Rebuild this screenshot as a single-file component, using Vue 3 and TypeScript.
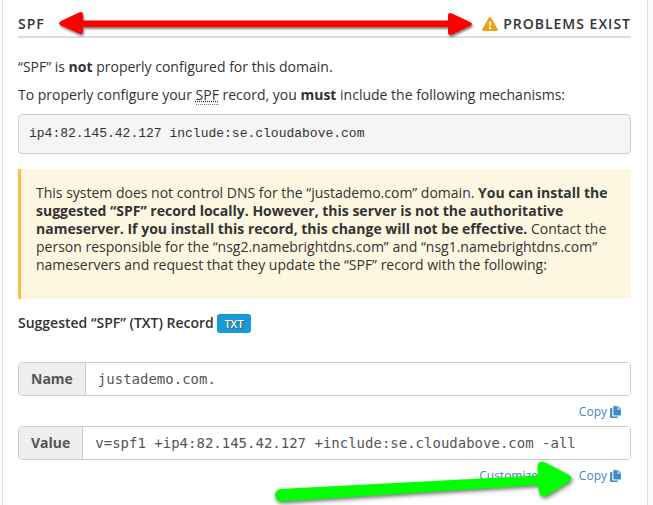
<script setup lang="ts">
interface RecordField {
  id: string
  label: string
  value: string
  customizable: boolean
}

const mechanisms = 'ip4:82.145.42.127 include:se.cloudabove.com'

const fields: RecordField[] = [
  { id: 'spf-name', label: 'Name', value: 'justademo.com.', customizable: false },
  {
    id: 'spf-value',
    label: 'Value',
    value: 'v=spf1 +ip4:82.145.42.127 +include:se.cloudabove.com -all',
    customizable: true,
  },
]

function copy(text: string): void {
  void navigator.clipboard?.writeText(text)
}
</script>

<template>
  <main class="page">
    <section class="panel">
      <header class="heading">
        <h2 class="title">SPF</h2>
        <div class="status">
          <svg class="warning" viewBox="0 0 16 14" aria-hidden="true">
            <path
              d="M6.8.8C7.3-.2 8.7-.2 9.2.8l6.5 11.1c.5.9-.1 2.1-1.2 2.1h-13C.4 14-.2 12.8.3 11.9z"
              fill="#eaa413"
            />
            <path d="M7 4.400h2l-.3 4.700H7.300z" fill="#fff" />
            <circle cx="8" cy="11.200" r="1.150" fill="#fff" />
          </svg>
          <span>Problems Exist</span>
        </div>
      </header>

      <p class="text">“SPF” is <strong>not</strong> properly configured for this domain.</p>
      <p class="text">
        To properly configure your <abbr title="Sender Policy Framework">SPF</abbr> record, you
        <strong>must</strong> include the following mechanisms:
      </p>
      <pre class="code">{{ mechanisms }}</pre>

      <div class="callout">
        This system does not control DNS for the “justademo.com” domain.
        <strong>You can install the suggested “SPF” record locally. However, this server is not the
        authoritative nameserver. If you install this record, this change will not be
        effective.</strong>
        Contact the person responsible for the “nsg2.namebrightdns.com” and
        “nsg1.namebrightdns.com” nameservers and request that they update the “SPF” record with the
        following:
      </div>

      <h3 class="subtitle">Suggested “SPF” (TXT) Record <span class="badge">TXT</span></h3>

      <div v-for="field in fields" :key="field.id" class="field">
        <div class="group">
          <label class="addon" :for="field.id">{{ field.label }}</label>
          <input :id="field.id" class="input" type="text" :value="field.value" readonly />
        </div>
        <div class="actions">
          <button v-if="field.customizable" type="button" class="action">Customize</button>
          <button type="button" class="action" @click="copy(field.value)">
            Copy
            <svg class="copy-icon" viewBox="0 0 11 12" aria-hidden="true">
              <path d="M2.300 2H1a1 1 0 0 0-1 1v8a1 1 0 0 0 1 1h6a1 1 0 0 0 1-1v-.6H3.300a1 1 0 0 1-1-1z" />
              <path d="M4.300 0h3.200v3.500H11V8.600a1 1 0 0 1-1 1H4.300a1 1 0 0 1-1-1V1a1 1 0 0 1 1-1z" />
              <path d="M8.300 0 11 2.700H8.300z" />
            </svg>
          </button>
        </div>
      </div>
    </section>

    <svg class="arrows" width="653" height="505" viewBox="0 0 653 505" aria-hidden="true">
      <g class="red">
        <path
          d="M61 21 79 12.500Q83 11 83 15V20.500H448V16Q448 12 452 13.500L470 22Q474 24 470 26L452 34.500Q448 36 448 32V27H83V31Q83 35 79 33.500L61 25.500Q57 23.500 61 21z"
        />
      </g>
      <g class="green">
        <path
          d="M281 489 538 475.500 537.500 467Q538 460 545 462.500L569 475Q574 478 569 482L548 495Q540 499 539 491L538.500 485 282 501.500C273 502 273 489.500 281 489z"
        />
      </g>
    </svg>
  </main>
</template>

<style>
body {
  margin: 0;
  background: #fafafa;
}
</style>

<style scoped>
.page {
  position: relative;
  height: 100vh;
  padding: 0 5px 0 2px;
  box-sizing: border-box;
  overflow: hidden;
  color: #333;
  font: 14px/20px "Open Sans", sans-serif;
}

.panel {
  min-height: 100vh;
  padding: 14px 16px 0 15px;
  box-sizing: border-box;
  background: #fff;
  border: 1px solid #ddd;
  border-width: 0 1px;
}

.heading {
  display: flex;
  justify-content: space-between;
  padding-bottom: 2px;
  margin-bottom: 19px;
  border-bottom: 2px solid #ddd;
  font-weight: 600;
  letter-spacing: 1px;
  text-transform: uppercase;
}

.title {
  margin: 0;
  font: inherit;
}

.status {
  display: flex;
  align-items: center;
  gap: 5px;
}

.warning {
  width: 16px;
  height: 14px;
}

.text {
  margin: 0 0 8px;
}

abbr {
  border-bottom: 1px dotted #777;
  text-decoration: underline dotted;
}

.code {
  margin: 9px 0 15px;
  padding: 9px 10px;
  background: #f5f5f5;
  border: 1px solid #ccc;
  border-radius: 4px;
  font: 13px/20px "Liberation Mono", monospace;
}

.callout {
  margin-bottom: 14px;
  padding: 15px 15px 25px;
  background: #fdf7e1;
  border-left: 3px solid #f5c242;
  line-height: 18px;
}

.subtitle {
  margin: 0 0 29px;
  font-size: 14px;
  font-weight: 600;
  line-height: 20px;
}

.badge {
  display: inline-block;
  padding: 0 7px;
  background: #179bd7;
  border-radius: 3px;
  color: #fff;
  font-size: 11px;
  font-weight: 600;
  line-height: 19px;
  text-shadow: 1px 1px 1px #555;
}

.group {
  display: flex;
  height: 34px;
  box-sizing: border-box;
  border: 1px solid #ccc;
  border-radius: 4px;
  overflow: hidden;
}

.addon {
  padding: 0 12px;
  background: #eee;
  border-right: 1px solid #ccc;
  color: #555;
  font-weight: 700;
  line-height: 32px;
}

.input {
  flex: 1;
  min-width: 0;
  padding: 0 12px;
  border: 0;
  outline: 0;
  background: #fff;
  color: #555;
  font: 14px/20px "DejaVu Sans Mono", monospace;
}

.actions {
  display: flex;
  justify-content: flex-end;
  gap: 41px;
  height: 28px;
  padding: 2px 10px 0 0;
}

.action {
  display: flex;
  align-items: center;
  gap: 3px;
  padding: 0;
  border: 0;
  background: none;
  color: #428bca;
  font: 12px/18px "Open Sans", sans-serif;
  cursor: pointer;
}

.copy-icon {
  width: 11px;
  height: 12px;
  fill: #428bca;
}

.arrows {
  position: absolute;
  top: 0;
  left: 0;
  pointer-events: none;
}

.red {
  fill: #f00;
  filter: drop-shadow(1px 2px 1px rgba(0, 0, 0, 0.5));
}

.green {
  fill: #0f0;
  filter: drop-shadow(1px 2px 2px rgba(0, 0, 0, 0.55));
}
</style>
